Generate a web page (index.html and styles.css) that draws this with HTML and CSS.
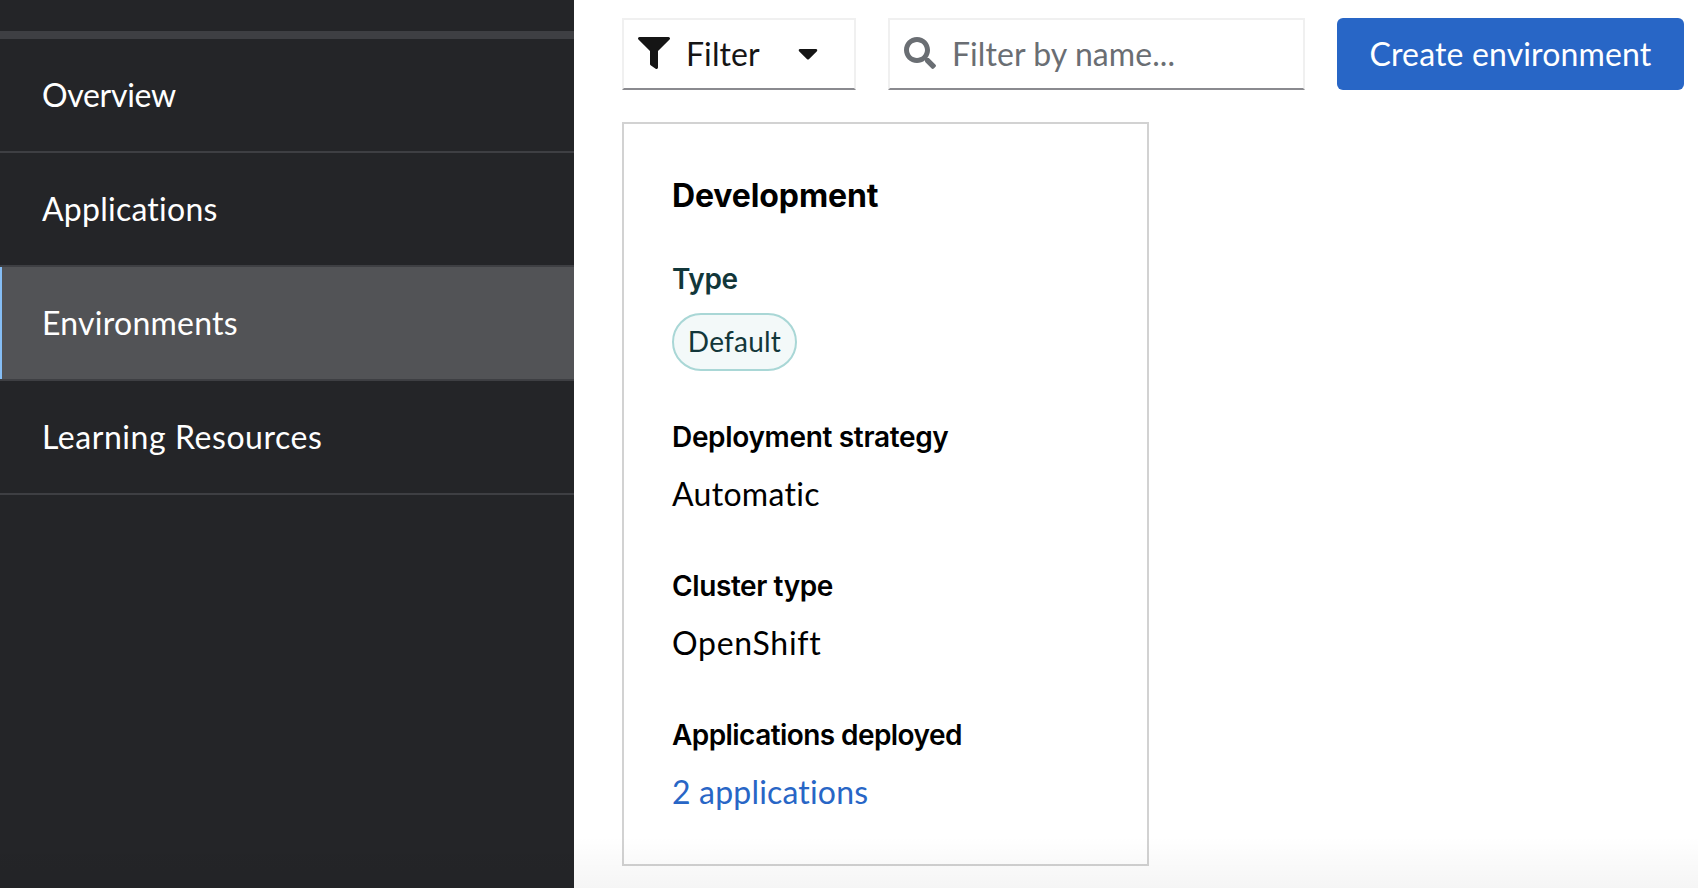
FILE: index.html
```
<!DOCTYPE html>
<html lang="en">
<head>
<meta charset="utf-8">
<title>Environments</title>
<link rel="stylesheet" href="styles.css">
</head>
<body>
<div class="page">
  <aside class="sidebar">
    <div class="sidebar-header"></div>
    <nav class="nav">
      <a class="nav-item nav-overview">Overview</a>
      <a class="nav-item nav-applications">Applications</a>
      <a class="nav-item nav-environments active">Environments</a>
      <a class="nav-item nav-learning">Learning Resources</a>
    </nav>
  </aside>
  <main class="main">
    <div class="toolbar">
      <div class="field filter-toggle">
        <svg class="icon" viewBox="0 0 512 512" fill="currentColor"><path d="M487.976 0H24.028C2.71 0-8.047 25.866 7.058 40.971L192 225.941V432c0 7.831 3.821 15.17 10.237 19.662l80 55.98C298.02 518.69 320 507.493 320 487.98V225.941l184.947-184.97C520.021 25.896 509.338 0 487.976 0z"/></svg>
        <span class="filter-label">Filter</span>
        <svg class="caret" viewBox="0 0 320 512" fill="currentColor"><path d="M31.3 192h257.3c17.800 0 26.700 21.500 14.100 34.100L174.100 354.800c-7.800 7.800-20.500 7.800-28.300 0L17.200 226.100C4.600 213.500 13.500 192 31.300 192z"/></svg>
      </div>
      <div class="field search">
        <svg class="icon" viewBox="0 0 512 512" fill="currentColor"><path d="M505 442.700L405.300 343c-4.500-4.500-10.600-7-17-7H372c27.600-35.300 44-79.700 44-128C416 93.100 322.900 0 208 0S0 93.100 0 208s93.100 208 208 208c48.300 0 92.700-16.400 128-44v16.300c0 6.400 2.500 12.500 7 17l99.700 99.700c9.400 9.400 24.600 9.400 33.900 0l28.300-28.300c9.400-9.400 9.400-24.600.1-34zM208 336c-70.700 0-128-57.200-128-128 0-70.700 57.200-128 128-128 70.700 0 128 57.200 128 128 0 70.700-57.200 128-128 128z"/></svg>
        <span class="search-placeholder">Filter by name...</span>
      </div>
      <button class="create-button">Create environment</button>
    </div>
    <article class="card">
      <h2 class="card-title">Development</h2>
      <section class="group group-type">
        <h3 class="label label-type">Type</h3>
        <span class="pill">Default</span>
      </section>
      <section class="group">
        <h3 class="label">Deployment strategy</h3>
        <p class="value">Automatic</p>
      </section>
      <section class="group">
        <h3 class="label label-cluster">Cluster type</h3>
        <p class="value value-cluster">OpenShift</p>
      </section>
      <section class="group">
        <h3 class="label label-deployed">Applications deployed</h3>
        <a class="value value-link">2 applications</a>
      </section>
    </article>
  </main>
</div>
</body>
</html>
```
FILE: styles.css
```
* { box-sizing: border-box; }

body {
  margin: 0;
  font: 32px/48px Lato, "Liberation Sans", sans-serif;
  color: #000;
  background: #fff;
}

.page {
  position: relative;
  display: flex;
  height: 888px;
  overflow: hidden;
}

/* soft shade along the bottom edge */
.page::after {
  content: "";
  position: absolute;
  left: 0;
  right: 0;
  bottom: 0;
  height: 52px;
  background: linear-gradient(rgba(0, 0, 0, 0), rgba(0, 0, 0, 0.04));
  pointer-events: none;
}

.sidebar {
  flex: none;
  width: 574px;
  background: #242528;
  color: #fff;
}

.sidebar-header {
  height: 39px;
  border-bottom: 8px solid #3e3f43;
}

.nav { display: flex; flex-direction: column; }

.nav-item {
  height: 114px;
  padding: 32px 42px 0;
  border-bottom: 2px solid #3e3f43;
}

.nav-overview { letter-spacing: -0.3px; }
.nav-applications { letter-spacing: 0.24px; }
.nav-environments { letter-spacing: 0.25px; }
.nav-learning { letter-spacing: 0.56px; }

.nav-item.active {
  background: linear-gradient(to right, #85bdf5 2px, #525356 2px);
}

.main { flex: 1; padding: 18px 14px 0 48px; }

.toolbar { display: flex; gap: 32px; height: 72px; }

.field {
  display: flex;
  align-items: flex-start;
  border: 2px solid #f0f0f0;
  border-bottom-color: #8a8a8f;
}

.icon { width: 32px; height: 32px; margin-top: 17px; flex: none; }

.filter-toggle { width: 234px; padding: 0 14px; color: #151515; }

.filter-label { margin: 10px 0 0 16px; width: 112px; letter-spacing: 0.09px; }

.caret { width: 20px; height: 32px; margin-top: 17px; }

.search { width: 417px; padding: 0 14px; color: #6a6e73; }

.search-placeholder { margin: 10px 0 0 16px; letter-spacing: 0.08px; }

.create-button {
  flex: 1;
  padding: 0;
  border: 0;
  border-radius: 6px;
  background: #2866c6;
  color: #fff;
  font: inherit;
  letter-spacing: 0.15px;
}

.card {
  width: 527px;
  height: 744px;
  margin-top: 32px;
  padding: 48px 48px 0;
  border: 2px solid #d2d2d2;
}

.card-title {
  margin: 0;
  font: 700 32px/48px Inter, sans-serif;
  letter-spacing: -0.12px;
}

.group { margin-top: 46.600px; }

.group-type { margin: 38px 0 -2.200px; color: #12373a; }

.label {
  margin: 0;
  font: 600 28px/42px Inter, sans-serif;
  letter-spacing: -0.330px;
}

.label-type { margin-bottom: 13px; letter-spacing: -0.39px; }
.label-cluster { letter-spacing: -0.4px; }
.label-deployed { letter-spacing: -0.57px; }

.pill {
  display: flex;
  justify-content: center;
  width: 125px;
  height: 58px;
  border: 2px solid #a9d7d6;
  border-radius: 29px;
  background: #f3f9f9;
  font-size: 28px;
  line-height: 53px;
  letter-spacing: 0.23px;
}

.group-type + .group { margin-top: 47.600px; }

.value { display: block; margin: 12px 0 0; letter-spacing: 0.3px; }

.value-cluster { letter-spacing: 0.71px; }

.value-link { color: #2866c6; letter-spacing: 0.18px; }
```
